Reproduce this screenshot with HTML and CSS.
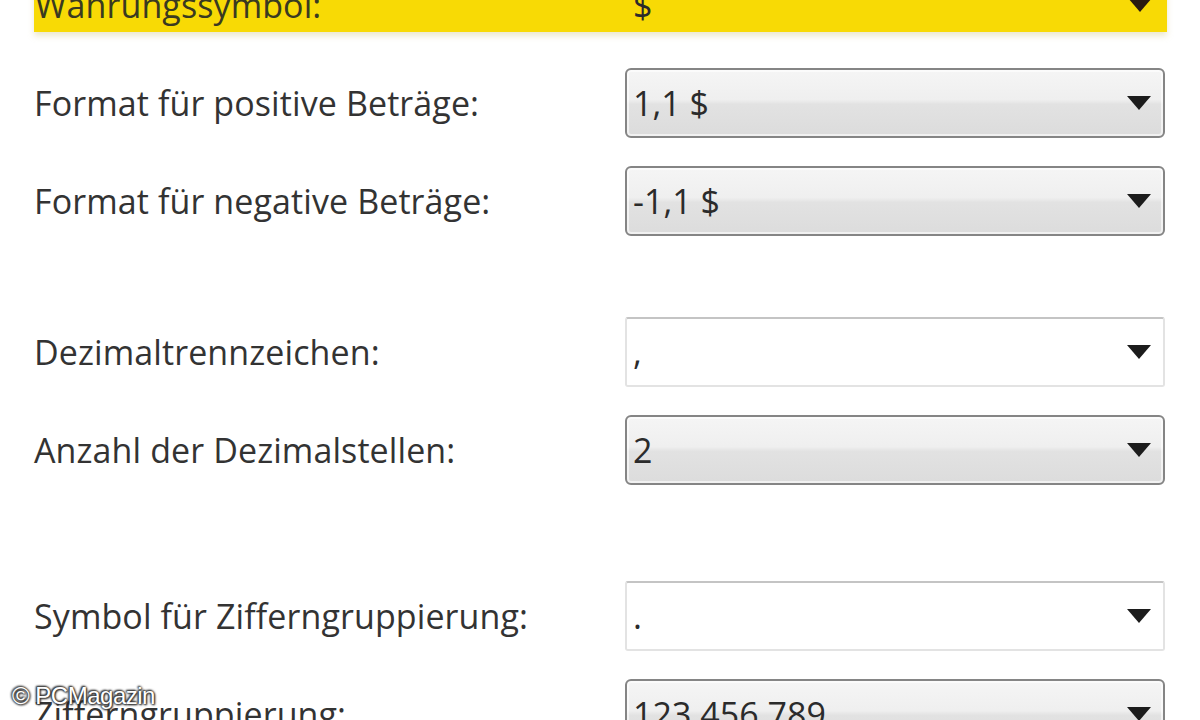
FILE: index.html
```html
<!DOCTYPE html>
<html lang="de">
<head>
<meta charset="utf-8">
<title>Währungsformat</title>
<link rel="stylesheet" href="styles.css">
</head>
<body>
<main class="form">
  <section class="group group-first">
    <div class="row row-highlight">
      <label class="label">Währungssymbol:</label>
      <div class="combo combo-flat"><span class="value">$</span><span class="arrow"></span></div>
    </div>
  </section>
  <section class="group group-second">
    <div class="row">
      <label class="label">Format für positive Beträge:</label>
      <div class="combo"><span class="value">1,1 $</span><span class="arrow"></span></div>
    </div>
    <div class="row">
      <label class="label">Format für negative Beträge:</label>
      <div class="combo"><span class="value">-1,1 $</span><span class="arrow"></span></div>
    </div>
  </section>
  <section class="group group-third">
    <div class="row">
      <label class="label">Dezimaltrennzeichen:</label>
      <div class="combo combo-edit"><span class="value">,</span><span class="arrow"></span></div>
    </div>
    <div class="row">
      <label class="label">Anzahl der Dezimalstellen:</label>
      <div class="combo"><span class="value">2</span><span class="arrow"></span></div>
    </div>
  </section>
  <section class="group group-fourth">
    <div class="row">
      <label class="label">Symbol für Zifferngruppierung:</label>
      <div class="combo combo-edit"><span class="value">.</span><span class="arrow"></span></div>
    </div>
    <div class="row">
      <label class="label">Zifferngruppierung:</label>
      <div class="combo"><span class="value">123.456.789</span><span class="arrow"></span></div>
    </div>
  </section>
</main>
<div class="watermark">© PCMagazin</div>
</body>
</html>
```
FILE: styles.css
```css
html, body {
  margin: 0;
  padding: 0;
  background: #ffffff;
  width: 1200px;
  height: 720px;
  overflow: hidden;
}

body {
  font-family: "Open Sans", "Noto Sans", sans-serif;
  color: #333333;
}

.form {
  display: flex;
  flex-direction: column;
  margin-top: -32px;
  padding-left: 33px;
}

.group {
  display: flex;
  flex-direction: column;
  gap: 28px;
}

.group-second { margin-top: 36px; }
.group-third { margin-top: 81px; }
.group-fourth { margin-top: 96px; }

.row {
  display: flex;
  align-items: center;
  height: 70px;
}

.label {
  width: 592px;
  font-size: 34px;
  letter-spacing: 0.1px;
  padding-left: 1px;
  box-sizing: border-box;
}

.combo {
  width: 540px;
  height: 70px;
  box-sizing: border-box;
  border: 2px solid #858585;
  border-radius: 6px;
  background: linear-gradient(#f5f5f5 0%, #efefef 45%, #e2e2e2 52%, #dcdcdc 100%);
  display: flex;
  align-items: center;
  padding: 0 12px 0 6px;
  box-shadow: inset 0 0 0 2px rgba(255,255,255,0.6);
}

.value {
  flex: 1;
  font-size: 34px;
  letter-spacing: 0;
  color: #2b2b2b;
}

.arrow {
  width: 0;
  height: 0;
  border-left: 12px solid transparent;
  border-right: 12px solid transparent;
  border-top: 14px solid #1c1c1c;
}

.combo-edit {
  background: #ffffff;
  border: 2px solid #e3e3e3;
  border-top-color: #c4c4c4;
  border-radius: 3px;
  box-shadow: none;
}

.row-highlight {
  background: #f8da05;
  width: 1133px;
  height: 64px;
  box-sizing: border-box;
  padding-top: 10px;
  margin-left: 1px;
  box-shadow: 0 4px 6px rgba(200, 190, 120, 0.35);
}

.row-highlight .label {
  width: 591px;
  color: #3a3a20;
}

.combo-flat {
  height: 54px;
  background: transparent;
  border: none;
  box-shadow: none;
  padding-left: 8px;
  padding-right: 13px;
}

.combo-flat .arrow {
  border-top-color: #2a1a10;
}

.watermark {
  position: absolute;
  left: 12px;
  top: 682px;
  font-family: "Liberation Sans", Arial, sans-serif;
  font-size: 24px;
  letter-spacing: -0.5px;
  color: #ffffff;
  text-shadow: 0 0 2px #333, 0 0 3px #333, 1px 1px 2px #222, -1px -1px 2px #222;
}
```
